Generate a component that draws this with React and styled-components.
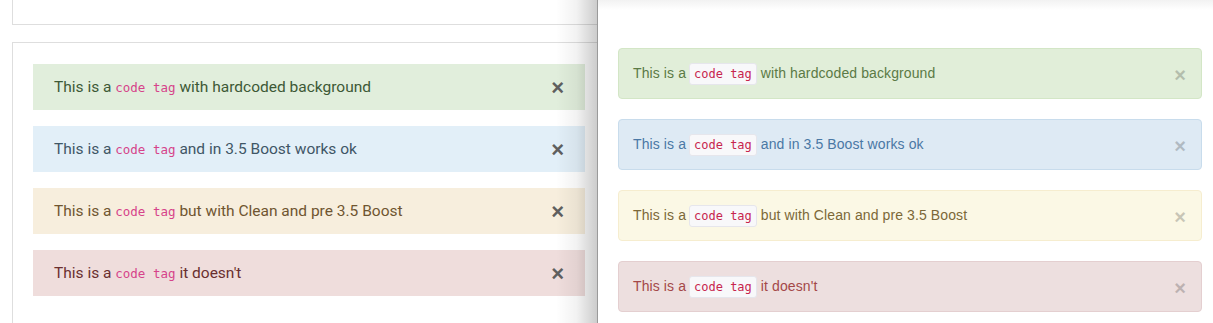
import styled, { createGlobalStyle } from 'styled-components';

const GlobalStyle = createGlobalStyle`
  html, body {
    margin: 0;
    padding: 0;
    background: #ffffff;
  }
  #root {
    width: 1213px;
    height: 323px;
  }
`;

const ALERTS = [
  { tone: 'success', text: 'with hardcoded background' },
  { tone: 'info', text: 'and in 3.5 Boost works ok' },
  { tone: 'warning', text: 'but with Clean and pre 3.5 Boost' },
  { tone: 'danger', text: "it doesn't" },
];

const BOOST_TONES = {
  success: { bg: '#e1eedc', fg: '#3d5936' },
  info: { bg: '#e2eff8', fg: '#3f5666' },
  warning: { bg: '#f7eedd', fg: '#6f5530' },
  danger: { bg: '#efdddc', fg: '#6a2f2f' },
};

const CLEAN_TONES = {
  success: { bg: '#e1eed9', border: '#d3e6c6', fg: '#5b7a45' },
  info: { bg: '#deeaf4', border: '#c8dcec', fg: '#4a78a5' },
  warning: { bg: '#fbf8e5', border: '#f6edcf', fg: '#7c6838' },
  danger: { bg: '#eddfdf', border: '#e4cfd0', fg: '#a44848' },
};

function App() {
  return (
    <>
      <GlobalStyle />
      <StyledScreen>
        <StyledBoostPane>
          <StyledTopCard />
          <StyledCard>
            {ALERTS.map(({ tone, text }) => (
              <StyledBoostAlert key={tone} tone={tone}>
                <span>
                  This is a <StyledBoostCode>code tag</StyledBoostCode> {text}
                </span>
                <StyledBoostClose>×</StyledBoostClose>
              </StyledBoostAlert>
            ))}
          </StyledCard>
        </StyledBoostPane>
        <StyledCleanPane>
          <StyledCleanBody>
            {ALERTS.map(({ tone, text }) => (
              <StyledCleanAlert key={tone} tone={tone}>
                <span>
                  This is a <StyledCleanCode>code tag</StyledCleanCode> {text}
                </span>
                <StyledCleanClose>×</StyledCleanClose>
              </StyledCleanAlert>
            ))}
          </StyledCleanBody>
        </StyledCleanPane>
      </StyledScreen>
    </>
  );
}

const StyledScreen = styled.div`
  display: flex;
  width: 1213px;
  height: 323px;
  overflow: hidden;
`;

const StyledBoostPane = styled.div`
  width: 597px;
  flex: none;
  padding-left: 12px;
  box-sizing: border-box;
  overflow: hidden;
  display: flex;
  flex-direction: column;
  gap: 17px;
`;

const StyledTopCard = styled.div`
  width: 640px;
  height: 25px;
  flex: none;
  border: 1px solid #dedede;
  border-top: none;
  box-sizing: border-box;
`;

const StyledCard = styled.div`
  width: 640px;
  flex: 1;
  border: 1px solid #dedede;
  border-bottom: none;
  padding: 21px 20px;
  display: flex;
  flex-direction: column;
  gap: 16px;
`;

const StyledBoostAlert = styled.div`
  width: 552px;
  height: 46px;
  box-sizing: border-box;
  display: flex;
  align-items: center;
  justify-content: space-between;
  padding: 0 21px;
  background: ${(props) => BOOST_TONES[props.tone].bg};
  color: ${(props) => BOOST_TONES[props.tone].fg};
  font-family: Roboto, 'Noto Sans', sans-serif;
  font-size: 15.5px;
`;

const StyledBoostCode = styled.code`
  font-family: 'DejaVu Sans Mono', 'Liberation Mono', monospace;
  font-size: 12.5px;
  color: #d6438a;
`;

const StyledBoostClose = styled.span`
  font-family: 'Liberation Sans', Arial, sans-serif;
  font-weight: 700;
  font-size: 22px;
  line-height: 1;
  color: #5f5f5f;
  margin-top: 2px;
`;

const StyledCleanPane = styled.div`
  position: relative;
  flex: 1;
  border-left: 1px solid #9a9a9a;
  background: linear-gradient(to bottom, #f2f2f2 0px, #ffffff 10px);

  &::before {
    content: '';
    position: absolute;
    top: 0;
    bottom: 0;
    left: -42px;
    width: 41px;
    background: linear-gradient(
      to right,
      rgba(0, 0, 0, 0) 0%,
      rgba(0, 0, 0, 0.05) 50%,
      rgba(0, 0, 0, 0.2) 100%
    );
  }
`;

const StyledCleanBody = styled.div`
  padding: 48px 11px 0 20px;
  display: flex;
  flex-direction: column;
  gap: 20px;
`;

const StyledCleanAlert = styled.div`
  height: 51px;
  box-sizing: border-box;
  display: flex;
  align-items: center;
  justify-content: space-between;
  padding: 0 15px 0 14px;
  border: 1px solid ${(props) => CLEAN_TONES[props.tone].border};
  border-radius: 4px;
  background: ${(props) => CLEAN_TONES[props.tone].bg};
  color: ${(props) => CLEAN_TONES[props.tone].fg};
  font-family: 'Liberation Sans', Arial, sans-serif;
  font-size: 14px;
  letter-spacing: 0.1px;
`;

const StyledCleanCode = styled.code`
  display: inline-block;
  padding: 1px 4px;
  margin: 0 0 0 -1px;
  font-family: 'DejaVu Sans Mono', 'Liberation Mono', monospace;
  font-size: 12px;
  line-height: 18px;
  letter-spacing: 0;
  color: #c7254e;
  background: #f8f8fa;
  border: 1px solid #e6e6ec;
  border-radius: 3px;
`;

const StyledCleanClose = styled.span`
  font-family: 'Liberation Sans', Arial, sans-serif;
  font-weight: 700;
  font-size: 20px;
  line-height: 1;
  color: #000000;
  opacity: 0.2;
  margin-top: 2px;
`;

export default App;
